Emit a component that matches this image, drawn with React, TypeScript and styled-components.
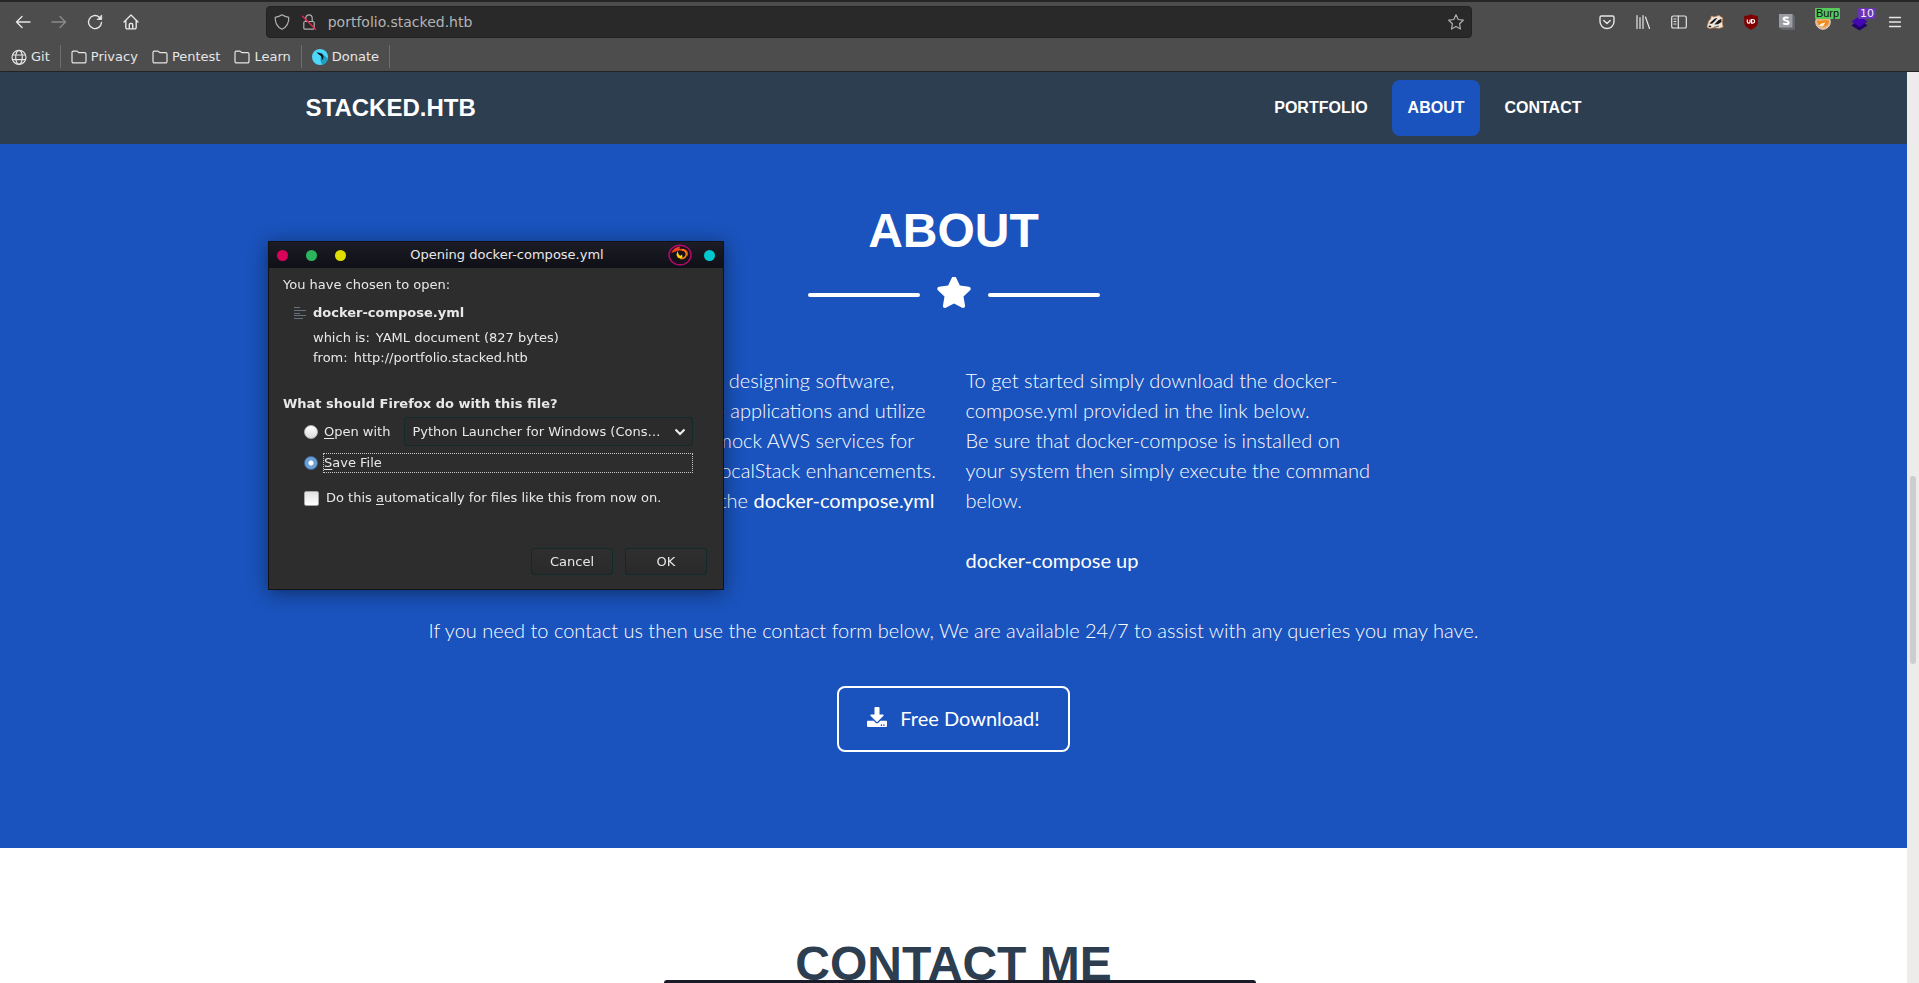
import React from "react";
import styled, { createGlobalStyle } from "styled-components";
import { FaStar, FaDownload } from "react-icons/fa";

const GlobalStyle = createGlobalStyle`
  *, *::before, *::after { box-sizing: border-box; }
  body {
    margin: 0;
    overflow: hidden;
    background: #fff;
  }
  h1, h2, p, ul { margin: 0; padding: 0; }
  button, input, select { font: inherit; color: inherit; margin: 0; }
`;

const uiFont = `"DejaVu Sans", sans-serif`;
const headingFont = `"Liberation Sans", Arial, sans-serif`;
const bodyFont = `Lato, sans-serif`;

/* ---------- window ---------- */

const Window = styled.div`
  display: flex;
  flex-direction: column;
  height: 100vh;
`;

const Chrome = styled.header`
  flex: none;
  background: #4d4d4d;
  border-top: 2px solid #262626;
  border-bottom: 1px solid #222;
  color: #e6e6e6;
  font-family: ${uiFont};
`;

const Toolbar = styled.div`
  display: flex;
  align-items: center;
  height: 40px;
  padding: 0 6px 0 5px;
`;

const ToolButton = styled.button<{ $dim?: boolean }>`
  position: relative;
  display: grid;
  place-items: center;
  flex: none;
  width: 36px;
  height: 32px;
  padding: 0;
  border: 0;
  background: none;
  color: ${(p) => (p.$dim ? "#8a8a8a" : "#e6e6e6")};
`;

const Spring = styled.div`
  flex: 1;
`;

const AddressBar = styled.form`
  flex: 10.2;
  display: flex;
  align-items: center;
  gap: 11px;
  height: 32px;
  padding: 0 7px;
  border: 1px solid #222;
  border-radius: 4px;
  background: #292929;
  color: #b0b0b0;
`;

const AddressInput = styled.input`
  flex: 1;
  min-width: 0;
  padding: 0;
  border: 0;
  outline: 0;
  background: none;
  color: #b4b4b4;
  font-size: 14px;
`;

const Badge = styled.span<{ $tone: "green" | "purple" }>`
  position: absolute;
  top: 2px;
  left: ${(p) => (p.$tone === "green" ? "10px" : "17px")};
  width: ${(p) => (p.$tone === "green" ? "25px" : "18px")};
  height: 11px;
  border-radius: 1px;
  background: ${(p) => (p.$tone === "green" ? "#58c85c" : "#6734b8")};
  color: ${(p) => (p.$tone === "green" ? "#111" : "#f0f0f0")};
  font-family: ${(p) => (p.$tone === "green" ? headingFont : uiFont)};
  font-size: 11px;
  line-height: 11px;
  text-align: center;
`;

const Bookmarks = styled.nav`
  display: flex;
  align-items: center;
  height: 29px;
  padding: 0 4px;
`;

const Bookmark = styled.a`
  display: flex;
  align-items: center;
  gap: 4px;
  padding: 0 7px;
  color: inherit;
  font-size: 13px;
  line-height: 16px;
  text-decoration: none;
`;

const BookmarkSeparator = styled.span`
  width: 1px;
  height: 23px;
  margin: 0 3px;
  background: #6e6e6e;
`;

const Viewport = styled.div`
  flex: 1;
  min-height: 0;
  display: flex;
`;

const Page = styled.div`
  flex: 1;
  min-width: 0;
  overflow: hidden;
  background: #fff;
`;

const Scrollbar = styled.div`
  flex: none;
  display: grid;
  grid-template-rows: 404fr 188fr 319fr;
  width: 12px;
  padding: 0 3px;
  background: #eeeceb;
`;

const Thumb = styled.div`
  grid-row: 2;
  border-radius: 3px;
  background: #cdcdcd;
`;

/* ---------- site ---------- */

const Container = styled.div`
  max-width: 1320px;
  margin: 0 auto;
  padding: 0 12px;
`;

const SiteNav = styled.nav`
  background: #2c3e50;
  color: #fff;
  font-family: ${headingFont};
  font-weight: 700;
`;

const NavInner = styled(Container)`
  display: flex;
  align-items: center;
  justify-content: space-between;
  height: 72px;
`;

const Brand = styled.a`
  color: inherit;
  font-size: 24px;
  line-height: 36px;
  text-decoration: none;
`;

const NavList = styled.ul`
  display: flex;
  gap: 8px;
  padding-right: 4px;
  list-style: none;
`;

const NavLink = styled.a<{ $active?: boolean }>`
  display: block;
  padding: 16px;
  border-radius: 8px;
  background: ${(p) => (p.$active ? "#1a53bd" : "transparent")};
  color: inherit;
  font-size: 16px;
  line-height: 24px;
  text-decoration: none;
`;

const AboutSection = styled.section`
  padding: 67px 0 96px;
  background: #1a53bd;
  color: #fff;
  font-family: ${bodyFont};
`;

const ContactSection = styled.section`
  padding: 96px 0;
  color: #2c3e50;
`;

const Heading = styled.h2`
  font-family: ${headingFont};
  font-size: 48px;
  font-weight: 700;
  line-height: 40px;
  text-align: center;
`;

const Divider = styled.div`
  display: flex;
  justify-content: center;
  gap: 16px;
  height: 36px;
  margin: 26px 0 52px;
`;

const DividerLine = styled.span`
  align-self: center;
  width: 112px;
  height: 4px;
  border-radius: 2px;
  background: #fff;
`;

const Columns = styled.div`
  display: grid;
  grid-template-columns: minmax(0, 416px) minmax(0, 416px);
  justify-content: center;
  gap: 24px;
`;

const Lead = styled.p<{ $centered?: boolean }>`
  font-size: 20px;
  font-weight: 300;
  line-height: 30px;
  text-align: ${(p) => (p.$centered ? "center" : "left")};
  margin-top: ${(p) => (p.$centered ? "40px" : "0")};

  strong { font-weight: 400; }
`;

const Actions = styled.div`
  display: flex;
  justify-content: center;
  margin-top: 41px;
`;

const DownloadButton = styled.a`
  display: flex;
  gap: 13px;
  padding: 15px 28px 17px;
  border: 2px solid #fff;
  border-radius: 8px;
  color: inherit;
  font-size: 20px;
  line-height: 30px;
  text-decoration: none;

  svg { margin-top: 4px; }
`;

const DesktopPanel = styled.div`
  position: fixed;
  bottom: 0;
  left: 50%;
  width: 592px;
  height: 3px;
  margin-left: -296px;
  border-radius: 8px 8px 0 0;
  background: #1a1b28;
`;

/* ---------- dialog ---------- */

const Dialog = styled.section`
  position: fixed;
  top: 241px;
  left: 268px;
  width: 456px;
  border: 1px solid #121216;
  background: #2d2d2d;
  box-shadow: 0 3px 18px rgba(0, 0, 0, 0.45);
  color: #e8e8e8;
  font-family: ${uiFont};
  font-size: 13px;
  line-height: 20px;
`;

const TitleBar = styled.header`
  display: flex;
  align-items: center;
  justify-content: space-between;
  height: 26px;
  padding: 0 8px;
  background: linear-gradient(#1c1c26, #0f0f18);
`;

const DialogTitle = styled.h1`
  font-size: 13px;
  font-weight: 400;
  line-height: 20px;
`;

const WindowControls = styled.div<{ $end?: boolean }>`
  display: flex;
  align-items: center;
  gap: ${(p) => (p.$end ? "12px" : "18px")};
`;

const WindowDot = styled.button<{ $color: string }>`
  width: 11px;
  height: 11px;
  padding: 0;
  border: 0;
  border-radius: 50%;
  background: ${(p) => p.$color};
`;

const DialogBody = styled.form`
  padding: 7px 16px 14px 14px;
`;

const FileSummary = styled.div`
  display: grid;
  grid-template-columns: 12px 1fr;
  column-gap: 7px;
  margin: 8px 0 26px 11px;

  svg { margin-top: 4px; }
`;

const FileName = styled.strong`
  margin-bottom: 5px;
`;

const FileDetail = styled.span`
  grid-column: 2;
  display: flex;
  gap: 6px;
`;

const Question = styled.p`
  font-weight: 700;
`;

const Options = styled.div`
  display: flex;
  flex-direction: column;
  padding: 3px 14px 0 21px;
`;

const OptionRow = styled.div<{ $gap: number }>`
  display: flex;
  align-items: center;
  gap: 5px;
  margin-bottom: ${(p) => p.$gap}px;
`;

const OptionLabel = styled.label<{ $focused?: boolean }>`
  flex: ${(p) => (p.$focused ? 1 : "none")};
  height: 20px;
  border: 1px dotted ${(p) => (p.$focused ? "#c8c8c8" : "transparent")};
  line-height: 18px;
  white-space: nowrap;

  u { text-underline-offset: 2px; }
`;

const Radio = styled.input.attrs({ type: "radio" })`
  appearance: none;
  flex: none;
  width: 14px;
  height: 14px;
  border: 1px solid #b5b5b5;
  border-radius: 50%;
  background: linear-gradient(#fff, #dcdcdc);

  &:checked {
    border-color: #3d6c9e;
    background: radial-gradient(circle, #fff 0 2px, #6d9fd6 3px 100%);
  }
`;

const Checkbox = styled.input.attrs({ type: "checkbox" })`
  appearance: none;
  flex: none;
  width: 15px;
  height: 15px;
  margin-right: 1px;
  border: 1px solid #a5a5a5;
  border-radius: 2px;
  background: linear-gradient(#e2e2e2, #fff);
`;

const SelectBox = styled.div`
  position: relative;
  flex: 1;
  min-width: 0;
  margin-left: 8px;

  svg {
    position: absolute;
    top: 11px;
    right: 7px;
    pointer-events: none;
  }
`;

const Select = styled.select`
  appearance: none;
  display: block;
  width: 100%;
  height: 29px;
  padding: 0 24px 0 7px;
  border: 1px solid #102b2a;
  border-radius: 3px;
  background: #2b2b2b;
`;

const DialogActions = styled.div`
  display: flex;
  justify-content: flex-end;
  gap: 12px;
  margin-top: 40px;
`;

const DialogButton = styled.button`
  width: 82px;
  height: 27px;
  padding: 0;
  border: 1px solid #102b2a;
  border-radius: 3px;
  background: linear-gradient(#2f2f2f, #2a2a2a);
`;

/* ---------- icons ---------- */

type IconProps = { children: React.ReactNode; size?: number; width?: number };

const Icon = ({ children, size = 16, width = 1.2 }: IconProps) => (
  <svg
    width={size}
    height={size}
    viewBox="0 0 16 16"
    fill="none"
    stroke="currentColor"
    strokeWidth={width}
    strokeLinecap="round"
    strokeLinejoin="round"
    aria-hidden="true"
  >
    {children}
  </svg>
);

const FolderIcon = () => (
  <Icon>
    <path d="M1 12.5v-9A1.4 1.4 0 0 1 2.4 2.1h3.2c.5 0 .8.2 1.1.5l1 1.1h5.9A1.4 1.4 0 0 1 15 5.100v7.400a1.400 1.400 0 0 1-1.400 1.400H2.400A1.400 1.400 0 0 1 1 12.500z" />
  </Icon>
);

const GlobeIcon = () => (
  <Icon>
    <circle cx="8" cy="8.300" r="7" />
    <ellipse cx="8" cy="8.300" rx="3.300" ry="7" />
    <path d="M1.500 6h13M1.500 10.600h13" />
  </Icon>
);

const DonateIcon = () => (
  <svg width="16" height="16" viewBox="0 0 16 16" aria-hidden="true">
    <circle cx="8" cy="8" r="8" fill="#4fd6fb" />
    <path d="M9 3.500l6.800 6A8 8 0 0 1 10 15.700l-1.500-4z" fill="#1f9fc4" />
    <path d="M4.500 3.200c3.500.3 6.500 1.600 7 4.300.2 1.600-1 2.600-1.700 3.900-.2-1.600.3-3-.9-4.300C7.800 5.600 6 5.400 4.500 3.200z" fill="#07141a" />
  </svg>
);

const BadgerIcon = () => (
  <svg width="18" height="16" viewBox="0 0 18 16" aria-hidden="true">
    <path d="M1 13l.8-3L3 6.500l1.500-1L5.500 2l2.500 1 5-1.500 1.200 1 2.300 1.200-.3 4.800.8 4.500-3.500 1.200-6-.5-4 .8z" fill="#ece7e0" stroke="#d98b4a" strokeWidth=".7" />
    <path d="M3.300 9.500L8.500 4.800l3-1-2.500 3.200-3 2.800zM8.300 10.500l4-4.200 3-1.600.2 3.200-3.500 2.400z" fill="#1c1a1a" />
    <path d="M2.300 12.300l1.500-1 1.700 1.200-1.500.9z" fill="#1c1a1a" />
    <path d="M8 13.200l5-1.200" stroke="#4a4545" strokeWidth=".8" />
  </svg>
);

const UblockIcon = () => (
  <svg width="16" height="16" viewBox="0 0 16 16" aria-hidden="true">
    <path d="M8 .3C6 1.600 3.800 2 1.200 2v6c0 3.800 2.600 5.900 6.800 7.800 4.200-1.900 6.800-4 6.800-7.800V2C12.200 2 10 1.600 8 .3z" fill="#800000" />
    <path d="M4.300 5.500v2.300a1.400 1.400 0 0 0 2.800 0V5.500M8.600 5.500v3.700h1.200a1.800 1.800 0 0 0 0-3.700z" fill="none" stroke="#fff" strokeWidth="1.200" />
  </svg>
);

const StylusIcon = () => (
  <svg width="16" height="16" viewBox="0 0 16 16" aria-hidden="true">
    <path d="M0 0h13.500L16 2.500V16H2.500L0 13.500z" fill="#62666b" />
    <path d="M0 0h13.500v13.500H0z" fill="#9a9ea3" />
    <path d="M9.500 4.300C8.800 3.300 4.600 3 4.600 5.100c0 2 5 1 5 3.300 0 2.200-4.300 2-5.300.7" fill="none" stroke="#fff" strokeWidth="2" />
  </svg>
);

const FoxyIcon = () => (
  <svg width="16" height="16" viewBox="0 0 16 16" aria-hidden="true">
    <circle cx="8" cy="8" r="7.300" fill="#e8b27a" stroke="#d9d4cf" />
    <path d="M2 6l3 1 6-1 3 1c0 3-2.500 5.500-6 5.500S2.500 10 2 6z" fill="#f08a1d" />
    <path d="M4 12c1.500-2.500 3-3 6.500-3.500L8 12.300z" fill="#fff3e2" />
  </svg>
);

const LayersIcon = () => (
  <svg width="17" height="17" viewBox="0 0 17 17" aria-hidden="true">
    <path d="M8.500 16.500L.5 11.500l3-2.500h10l3 2.500z" fill="#21046b" />
    <path d="M8.500 13L.5 7.500l8-5.500 8 5.500z" fill="#4207b0" />
  </svg>
);

const FlameIcon = () => (
  <svg width="24" height="22" viewBox="0 0 24 22" aria-hidden="true">
    <ellipse cx="12" cy="11" rx="11" ry="9.800" fill="#16101c" stroke="#b8086c" strokeWidth="1.400" />
    <path d="M3.500 9c1-3.500 4.500-6.200 9-6.200-1 .8-1.200 1.600-.5 2.200 4-.8 7 .8 8 3.800.3 1.500 0 2.600-.8 3.600-.3-2.400-1.400-4.200-3.400-5.200-2.800-1.200-6-1-8.300.3C6 8.200 4.800 8.400 3.500 9z" fill="#f0401c" />
    <path d="M14 5.500c3 .8 4.800 3 4.200 5.800-.7 2.500-3.500 3.800-6 3" fill="none" stroke="#f5820c" strokeWidth="1.500" />
    <path d="M10 7c-2 2.500-1.700 5.600.5 6.900 1.800.8 3.500.2 4-1l-.4-2.400-1.500 1.300c-1.800-.6-2.800-2.400-2.600-4.800z" fill="#ffd20a" />
  </svg>
);

const bookmarkFolders = ["Privacy", "Pentest", "Learn"];

export default function App() {
  return (
    <Window>
      <GlobalStyle />
      <Chrome>
        <Toolbar>
          <ToolButton aria-label="Back">
            <Icon width={1.4}><path d="M15 8H1.500M7 2.500L1.500 8 7 13.500" /></Icon>
          </ToolButton>
          <ToolButton aria-label="Forward" $dim>
            <Icon width={1.4}><path d="M1 8h13.500M9 2.500L14.500 8 9 13.500" /></Icon>
          </ToolButton>
          <ToolButton aria-label="Reload">
            <Icon width={1.4}>
              <path d="M12.300 3.200A6.500 6.500 0 1 0 14.500 8.500" />
              <path d="M14.700 1.300v4.200h-4.200z" fill="currentColor" strokeWidth="0.800" />
            </Icon>
          </ToolButton>
          <ToolButton aria-label="Home">
            <Icon width={1.400}>
              <path d="M1 8l7-7 7 7M2.800 6.500v7a1.400 1.400 0 0 0 1.400 1.400h7.600a1.400 1.400 0 0 0 1.400-1.400v-7M6.300 14.500v-4a1 1 0 0 1 1-1h1.400a1 1 0 0 1 1 1v4" />
            </Icon>
          </ToolButton>
          <Spring />
          <AddressBar>
            <Icon><path d="M8 .8C6 2.200 3.800 3 1.200 3.300 1 8.500 3 13 8 15.300c5-2.300 7-6.800 6.800-12C12.200 3 10 2.200 8 .8z" /></Icon>
            <Icon>
              <rect x="2.800" y="7.500" width="10.400" height="7.700" rx="1.300" />
              <path d="M4.800 7.500V4a3.200 3.200 0 0 1 6.400 0v3.500" />
              <path d="M1.500 2.200l13 13" stroke="#e22850" strokeWidth="1.400" />
            </Icon>
            <AddressInput aria-label="Address" defaultValue="portfolio.stacked.htb" />
            <Icon><path d="M8 .8l2.200 4.700 5.100.7-3.700 3.600.9 5.200L8 12.500 3.500 15l.9-5.200L.7 6.200l5.100-.7z" /></Icon>
          </AddressBar>
          <Spring />
          <ToolButton aria-label="Pocket">
            <Icon width={1.400}><path d="M2.400 2h11.200c.8 0 1.400.6 1.400 1.400V7.500a7 7 0 0 1-14 0V3.400C1 2.600 1.600 2 2.400 2zM4.800 6.500L8 9.600l3.200-3.100" /></Icon>
          </ToolButton>
          <ToolButton aria-label="Library">
            <Icon><path d="M2 1.500v13M5 3.500v11M8 1.500v13M10.500 3l4 11.500" /></Icon>
          </ToolButton>
          <ToolButton aria-label="Sidebar">
            <Icon>
              <rect x=".7" y="2" width="14.600" height="12" rx="1.600" />
              <path d="M7.300 2v12M3 5h2M3 7.500h2M3 10h2" />
            </Icon>
          </ToolButton>
          <ToolButton aria-label="Privacy Badger"><BadgerIcon /></ToolButton>
          <ToolButton aria-label="uBlock"><UblockIcon /></ToolButton>
          <ToolButton aria-label="Stylus"><StylusIcon /></ToolButton>
          <ToolButton aria-label="Proxy">
            <FoxyIcon />
            <Badge $tone="green">Burp</Badge>
          </ToolButton>
          <ToolButton aria-label="Wappalyzer">
            <LayersIcon />
            <Badge $tone="purple">10</Badge>
          </ToolButton>
          <ToolButton aria-label="Menu">
            <Icon width={1.300}><path d="M2.500 3.500h11M2.500 8h11M2.500 12.500h11" /></Icon>
          </ToolButton>
        </Toolbar>
        <Bookmarks>
          <Bookmark href="#git"><GlobeIcon />Git</Bookmark>
          <BookmarkSeparator />
          {bookmarkFolders.map((name) => (
            <Bookmark key={name} href={`#${name.toLowerCase()}`}><FolderIcon />{name}</Bookmark>
          ))}
          <BookmarkSeparator />
          <Bookmark href="#donate"><DonateIcon />Donate</Bookmark>
          <BookmarkSeparator />
        </Bookmarks>
      </Chrome>

      <Viewport>
        <Page>
          <SiteNav>
            <NavInner>
              <Brand href="#top">STACKED.HTB</Brand>
              <NavList>
                <li><NavLink href="#portfolio">PORTFOLIO</NavLink></li>
                <li><NavLink href="#about" $active>ABOUT</NavLink></li>
                <li><NavLink href="#contact">CONTACT</NavLink></li>
              </NavList>
            </NavInner>
          </SiteNav>

          <AboutSection>
            <Container>
              <Heading>ABOUT</Heading>
              <Divider>
                <DividerLine />
                <FaStar size={36} viewBox="0 16 576 576" />
                <DividerLine />
              </Divider>
              <Columns>
                <Lead>
                  Our team specialises in designing software, building web sites, web applications
                  and utilize LocalStack in order to mock AWS services for testing, with multiple
                  LocalStack enhancements. Feel free to download
                  the <strong>docker-compose.yml</strong>
                </Lead>
                <Lead>
                  To get started simply download the docker-compose.yml provided in the link below.
                  <br />
                  Be sure that docker-compose is installed on your system then simply execute the
                  command below.
                  <br />
                  <br />
                  <strong>docker-compose up</strong>
                </Lead>
              </Columns>
              <Lead $centered>
                If you need to contact us then use the contact form below, We are available 24/7 to
                assist with any queries you may have.
              </Lead>
              <Actions>
                <DownloadButton href="#download">
                  <FaDownload size={20} />
                  Free Download!
                </DownloadButton>
              </Actions>
            </Container>
          </AboutSection>

          <ContactSection>
            <Heading>CONTACT ME</Heading>
          </ContactSection>
        </Page>
        <Scrollbar><Thumb /></Scrollbar>
      </Viewport>

      <DesktopPanel />

      <Dialog role="dialog" aria-labelledby="dialog-title">
        <TitleBar>
          <WindowControls>
            <WindowDot $color="#d9045a" aria-label="Close" />
            <WindowDot $color="#2db55d" aria-label="Minimize" />
            <WindowDot $color="#dede00" aria-label="Maximize" />
          </WindowControls>
          <DialogTitle id="dialog-title">Opening docker-compose.yml</DialogTitle>
          <WindowControls $end>
            <FlameIcon />
            <WindowDot $color="#00c8cc" aria-label="Pin" />
          </WindowControls>
        </TitleBar>
        <DialogBody>
          <p>You have chosen to open:</p>
          <FileSummary>
            <svg width="12" height="12" viewBox="0 0 12 12" stroke="#66727f" aria-hidden="true">
              <path d="M0 .5h6M0 3.500h12M0 6.500h6M0 8.500h12M0 11.500h9" />
            </svg>
            <FileName>docker-compose.yml</FileName>
            <FileDetail><span>which is:</span><span>YAML document (827 bytes)</span></FileDetail>
            <FileDetail><span>from:</span><span>http://portfolio.stacked.htb</span></FileDetail>
          </FileSummary>
          <Question>What should Firefox do with this file?</Question>
          <Options>
            <OptionRow $gap={7}>
              <Radio id="open-with" name="action" />
              <OptionLabel htmlFor="open-with"><u>O</u>pen with</OptionLabel>
              <SelectBox>
                <Select aria-label="Application">
                  <option>Python Launcher for Windows (Cons…</option>
                </Select>
                <svg width="12" height="8" viewBox="0 0 12 8" fill="none" stroke="#f0f0f0" strokeWidth="2" aria-hidden="true">
                  <path d="M1.500 1.500L6 6l4.500-4.500" />
                </svg>
              </SelectBox>
            </OptionRow>
            <OptionRow $gap={15}>
              <Radio id="save-file" name="action" defaultChecked />
              <OptionLabel htmlFor="save-file" $focused><u>S</u>ave File</OptionLabel>
            </OptionRow>
            <OptionRow $gap={0}>
              <Checkbox id="remember" />
              <OptionLabel htmlFor="remember">
                Do this <u>a</u>utomatically for files like this from now on.
              </OptionLabel>
            </OptionRow>
          </Options>
          <DialogActions>
            <DialogButton type="button">Cancel</DialogButton>
            <DialogButton type="button">OK</DialogButton>
          </DialogActions>
        </DialogBody>
      </Dialog>
    </Window>
  );
}
